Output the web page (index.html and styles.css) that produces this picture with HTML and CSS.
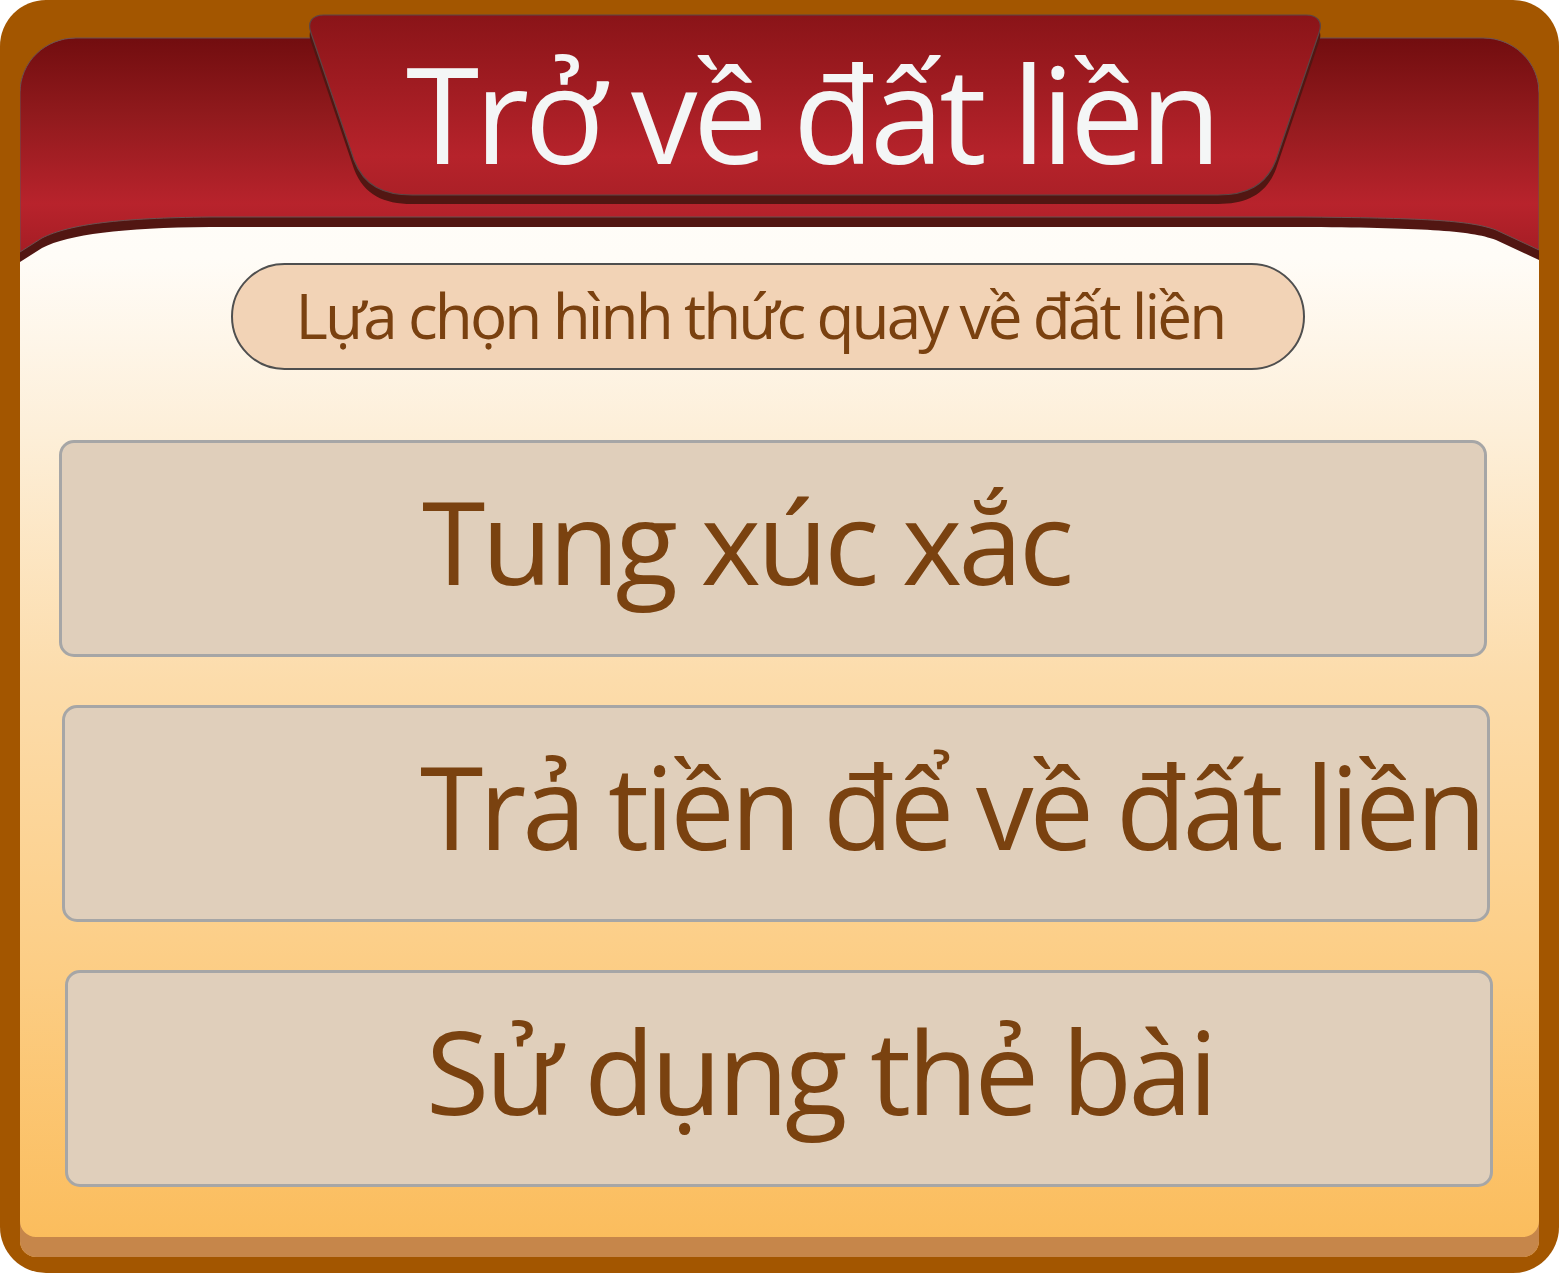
FILE: index.html
```html
<!DOCTYPE html>
<html lang="vi">
<head>
<meta charset="utf-8">
<title>Trở về đất liền</title>
<link rel="stylesheet" href="styles.css">
</head>
<body>
<div class="frame">
  <div class="panel">
    <div class="header">
      <svg class="header-art" viewBox="20 0 1519 300" width="1519" height="300" aria-hidden="true">
        <defs>
          <linearGradient id="redBand" gradientUnits="userSpaceOnUse" x1="0" y1="38" x2="0" y2="262">
            <stop offset="0" stop-color="#720d0f"/>
            <stop offset="0.35" stop-color="#911a1d"/>
            <stop offset="0.74" stop-color="#b8232c"/>
            <stop offset="1" stop-color="#a21c23"/>
          </linearGradient>
          <linearGradient id="tabFill" gradientUnits="userSpaceOnUse" x1="0" y1="15" x2="0" y2="196">
            <stop offset="0" stop-color="#8a1418"/>
            <stop offset="0.78" stop-color="#b6232b"/>
            <stop offset="1" stop-color="#ab2027"/>
          </linearGradient>
        </defs>
        <path transform="translate(0,10)" fill="#521612" d="M20,93 C20,62 45,38 76,38 L1483,38 C1514,38 1539,62 1539,93 L1539,250 L1496,230 C1470,220 1420,218 1300,217 L210,217 C120,218 70,224 42,238 L20,252 Z"/>
        <path fill="url(#redBand)" stroke="#6b5050" stroke-width="1" d="M20,93 C20,62 45,38 76,38 L1483,38 C1514,38 1539,62 1539,93 L1539,250 L1496,230 C1470,220 1420,218 1300,217 L210,217 C120,218 70,224 42,238 L20,252 Z"/>
        <path transform="translate(0,9)" fill="#521612" d="M324,15 L1306,15 C1318,15 1323,22 1319,33 L1276,160 C1266,186 1246,195 1218,195 L412,195 C384,195 364,186 354,160 L311,33 C307,22 312,15 324,15 Z"/>
        <path fill="url(#tabFill)" stroke="#5c4646" stroke-width="1.2" d="M324,15 L1306,15 C1318,15 1323,22 1319,33 L1276,160 C1266,186 1246,195 1218,195 L412,195 C384,195 364,186 354,160 L311,33 C307,22 312,15 324,15 Z"/>
      </svg>
      <h1 class="title">Trở về đất liền</h1>
    </div>
    <div class="pill">Lựa chọn hình thức quay về đất liền</div>
    <div class="options">
      <div class="option option-1">Tung xúc xắc</div>
      <div class="option option-2">Trả tiền để về đất liền</div>
      <div class="option option-3">Sử dụng thẻ bài</div>
    </div>
  </div>
</div>
</body>
</html>
```

FILE: styles.css
```css
html, body {
  margin: 0;
  padding: 0;
  background: #ffffff;
}

body {
  font-family: "Open Sans", "Noto Sans", sans-serif;
}

.frame {
  width: 1559px;
  height: 1273px;
  box-sizing: border-box;
  padding: 38px 20px 16px 20px;
  background: #a35600;
  border-radius: 46px;
}

.panel {
  position: relative;
  height: 1219px;
  border-radius: 56px 56px 16px 16px;
  background: linear-gradient(to bottom,
    #fffefc 0px,
    #fffcf7 220px,
    #fdefd9 392px,
    #fcdcab 642px,
    #fccd84 940px,
    #fbbd5d 1199px);
  box-shadow: inset 0 -20px 0 #c6864a;
  display: flex;
  flex-direction: column;
}

.header {
  position: relative;
  height: 225px;
  box-sizing: border-box;
  padding-top: 8px;
}

.header-art {
  position: absolute;
  left: 0;
  top: -38px;
  display: block;
}

.title {
  position: relative;
  margin: 0;
  padding-left: 64px;
  text-align: center;
  font-family: "Open Sans", "Noto Sans", sans-serif;
  font-weight: 400;
  font-size: 133px;
  line-height: 133px;
  letter-spacing: -4.6px;
  color: #f4f6f6;
  white-space: nowrap;
}

.pill {
  margin-left: 211px;
  width: 1074px;
  height: 107px;
  box-sizing: border-box;
  border: 2px solid #4f4f4f;
  border-radius: 54px;
  background: #f2d3b6;
  color: #7a4110;
  font-size: 62px;
  line-height: 100px;
  letter-spacing: -2.9px;
  padding-right: 16px;
  text-align: center;
  white-space: nowrap;
}

.options {
  display: flex;
  flex-direction: column;
  gap: 48px;
  margin-top: 70px;
}

.option {
  width: 1428px;
  height: 217px;
  box-sizing: border-box;
  border: 3px solid #a6a6a6;
  border-radius: 15px;
  background: #e0cfbb;
  color: #7a4210;
  font-size: 115px;
  line-height: 115px;
  letter-spacing: -3.6px;
  padding-top: 40px;
  white-space: nowrap;
}

.option-1 {
  margin-left: 39px;
  padding-left: 360px;
}

.option-2 {
  margin-left: 42px;
  padding-left: 355px;
  letter-spacing: -4px;
}

.option-3 {
  margin-left: 45px;
  padding-left: 358px;
}
```
